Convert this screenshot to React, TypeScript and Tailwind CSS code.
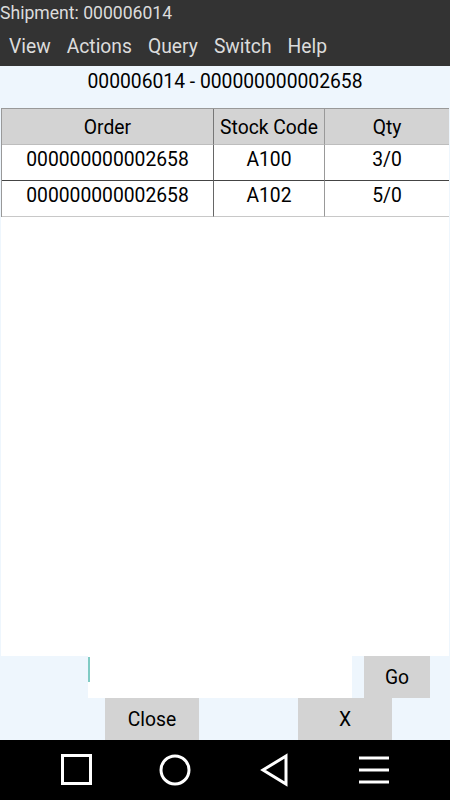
import React from "react";

const rows = [
  { order: "000000000002658", code: "A100", qty: "3/0" },
  { order: "000000000002658", code: "A102", qty: "5/0" },
];

const menu = ["View", "Actions", "Query", "Switch", "Help"];

const App = () => {
  return (
    <div
      className="w-[450px] h-[800px] flex flex-col bg-[#eef6fd] overflow-hidden"
      style={{ fontFamily: "Roboto, 'Liberation Sans', sans-serif" }}
    >
      <div className="h-[66px] bg-[#333333] text-[#dcdcdc] shrink-0">
        <div className="h-[28px] text-[17.6px] leading-[26px]">Shipment: 000006014</div>
        <div className="flex gap-[16px] pl-[9px] text-[19.3px] leading-[38px]">
          {menu.map((m) => (
            <span key={m}>{m}</span>
          ))}
        </div>
      </div>

      <div className="h-[29px] pt-[2px] text-center text-[19.3px] leading-[28px] text-black">
        000006014 - 000000000002658
      </div>

      <div className="flex-1 flex flex-col pl-px pr-px mt-[13px]">
        <div className="grid grid-cols-[212px_111px_1fr] text-[19.3px] text-black border-t border-[#999999] border-l border-l-[#999999]">
          <div className="h-[36px] bg-[#d3d3d3] flex items-center justify-center pt-[3px] border-b border-[#bdbdbd] border-r border-r-[#777777]">
            Order
          </div>
          <div className="h-[36px] bg-[#d3d3d3] flex items-center justify-center pt-[3px] border-b border-[#bdbdbd] border-r border-r-[#999999]">
            Stock Code
          </div>
          <div className="h-[36px] bg-[#d3d3d3] flex items-center justify-center pt-[3px] border-b border-[#bdbdbd]">
            Qty
          </div>
          {rows.map((r, i) => (
            <React.Fragment key={i}>
              <div
                className={`h-[36px] bg-white flex items-start leading-[26px] pt-[2px] justify-center border-r border-r-[#666666] ${
                  i === 0 ? "border-b border-[#444444]" : "border-b border-[#c8c8c8]"
                }`}
              >
                {r.order}
              </div>
              <div
                className={`h-[36px] bg-white flex items-start leading-[26px] pt-[2px] justify-center border-r border-r-[#999999] ${
                  i === 0 ? "border-b border-[#444444]" : "border-b border-[#c8c8c8]"
                }`}
              >
                {r.code}
              </div>
              <div
                className={`h-[36px] bg-white flex items-start leading-[26px] pt-[2px] justify-center ${
                  i === 0 ? "border-b border-[#444444]" : "border-b border-[#c8c8c8]"
                }`}
              >
                {r.qty}
              </div>
            </React.Fragment>
          ))}
        </div>
        <div className="flex-1 bg-white" />
      </div>

      <div className="h-[42px] flex items-stretch shrink-0">
        <div className="w-[88px]" />
        <div className="w-[264px] bg-white relative">
          <div className="absolute left-0 top-px w-[2px] h-[25px] bg-[#80cbc4]" />
        </div>
        <div className="w-[12px]" />
        <button className="w-[66px] bg-[#d3d3d3] text-[19.3px] text-black pt-[3px]">Go</button>
      </div>

      <div className="h-[42px] flex items-stretch shrink-0">
        <div className="w-[105px]" />
        <button className="w-[94px] bg-[#d3d3d3] text-[19.3px] text-black pt-[3px]">Close</button>
        <div className="w-[99px]" />
        <button className="w-[94px] bg-[#d3d3d3] text-[19.3px] text-black pt-[3px]">X</button>
      </div>

      <div className="h-[60px] bg-black flex items-center shrink-0 relative">
        <svg width="450" height="60" viewBox="0 0 450 60">
          <rect x="62.5" y="15.5" width="28" height="28" fill="none" stroke="white" strokeWidth="3" />
          <circle cx="175" cy="30" r="14" fill="none" stroke="white" strokeWidth="3" />
          <path d="M286 16 L263 30 L286 44 Z" fill="none" stroke="white" strokeWidth="3" strokeLinejoin="miter" />
          <line x1="359" y1="18" x2="389" y2="18" stroke="white" strokeWidth="3" />
          <line x1="359" y1="30" x2="389" y2="30" stroke="white" strokeWidth="3" />
          <line x1="359" y1="42" x2="389" y2="42" stroke="white" strokeWidth="3" />
        </svg>
      </div>
    </div>
  );
};

export default App;
